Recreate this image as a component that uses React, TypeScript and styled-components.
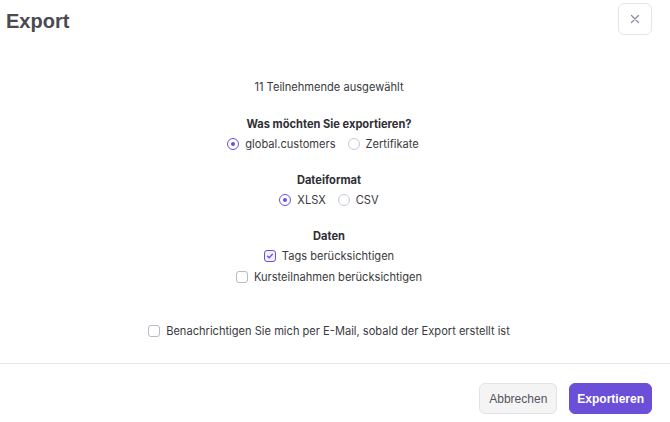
import React, { useState } from "react";
import styled, { createGlobalStyle } from "styled-components";

const Global = createGlobalStyle`
  html, body { margin: 0; padding: 0; background: #ffffff; }
  body { font-family: Inter, "Noto Sans", sans-serif; }
  * { box-sizing: border-box; }
`;

const Page = styled.div`
  width: 670px;
  height: 422px;
  background: #fff;
  display: flex;
  flex-direction: column;
  overflow: hidden;
`;

const Header = styled.div`
  display: flex;
  align-items: center;
  justify-content: space-between;
  padding: 3px 18px 0 6px;
  height: 35px;
`;

const Title = styled.h1`
  margin: 0;
  padding-top: 4px;
  font-family: "Liberation Sans", Arial, sans-serif;
  font-weight: 700;
  font-size: 20px;
  color: #4a4a50;
  line-height: 24px;
`;

const CloseButton = styled.button`
  width: 34px;
  height: 32px;
  border: 1px solid #e4e4ea;
  border-radius: 6px;
  background: #fff;
  display: flex;
  align-items: center;
  justify-content: center;
  padding: 0;
  cursor: pointer;
`;

const Content = styled.div`
  flex: 1;
  display: flex;
  flex-direction: column;
  align-items: center;
  padding: 44px 12px 0 0;
  color: #3a3a40;
  font-size: 11.1px;
  line-height: 16px;
`;

const Info = styled.div`
  margin-bottom: 21px;
  color: #3a3a40;
`;

const Section = styled.div`
  display: flex;
  flex-direction: column;
  align-items: center;
  gap: 4px;
  margin-bottom: 20px;
`;

const CheckList = styled.div`
  display: flex;
  flex-direction: column;
  align-items: center;
  gap: 5px;
`;

const SectionTitle = styled.div`
  font-weight: 700;
  color: #2f2f35;
`;

const Row = styled.div<{ $shift?: number }>`
  display: flex;
  align-items: center;
  gap: 12px;
  margin-right: ${(p) => p.$shift ?? 0}px;
`;

const Option = styled.label`
  display: inline-flex;
  align-items: center;
  gap: 6px;
  cursor: pointer;
  white-space: nowrap;
`;

const RadioDot = styled.span<{ $on: boolean }>`
  width: 12px;
  height: 12px;
  border-radius: 50%;
  border: 1px solid ${(p) => (p.$on ? "#6c4fd9" : "#c9c9d1")};
  display: inline-flex;
  align-items: center;
  justify-content: center;
  background: #fff;
  &::after {
    content: "";
    width: 4px;
    height: 4px;
    border-radius: 50%;
    background: ${(p) => (p.$on ? "#6c4fd9" : "transparent")};
  }
`;

const Box = styled.span<{ $on: boolean }>`
  width: 12px;
  height: 12px;
  border-radius: 3px;
  border: 1px solid ${(p) => (p.$on ? "#6c4fd9" : "#b9b9c2")};
  background: ${(p) => (p.$on ? "#f3f0ff" : "#fff")};
  display: inline-flex;
  align-items: center;
  justify-content: center;
`;

const EmailRow = styled.div`
  margin-top: 18px;
`;

const Divider = styled.div`
  height: 1px;
  background: #e6e6ea;
  width: 100%;
`;

const Footer = styled.div`
  display: flex;
  justify-content: flex-end;
  gap: 12px;
  padding: 19px 18px 8px 0;
`;

const Button = styled.button<{ $primary?: boolean }>`
  height: 31px;
  padding: 0 ${(p) => (p.$primary ? "7px" : "9px")};
  border-radius: 6px;
  font-family: "Liberation Sans", Arial, sans-serif;
  font-size: 12px;
  font-weight: ${(p) => (p.$primary ? 700 : 400)};
  border: 1px solid ${(p) => (p.$primary ? "#6c4fd9" : "#e2e2e6")};
  background: ${(p) => (p.$primary ? "#6c4fd9" : "#f4f4f5")};
  color: ${(p) => (p.$primary ? "#ffffff" : "#55555b")};
  cursor: pointer;
`;

function Radio({ on, label, onClick }: { on: boolean; label: string; onClick: () => void }) {
  return (
    <Option onClick={onClick}>
      <RadioDot $on={on} />
      {label}
    </Option>
  );
}

function Check({ on, label, onClick }: { on: boolean; label: string; onClick: () => void }) {
  return (
    <Option onClick={onClick}>
      <Box $on={on}>
        {on && (
          <svg width="8" height="8" viewBox="0 0 8 8">
            <path d="M1.6 4.2 L3.2 5.7 L6.4 2.3" fill="none" stroke="#6c4fd9" strokeWidth="1.3" strokeLinecap="round" strokeLinejoin="round" />
          </svg>
        )}
      </Box>
      {label}
    </Option>
  );
}

export default function App() {
  const [what, setWhat] = useState("customers");
  const [fmt, setFmt] = useState("xlsx");
  const [tags, setTags] = useState(true);
  const [kurse, setKurse] = useState(false);
  const [mail, setMail] = useState(false);

  return (
    <Page>
      <Global />
      <Header>
        <Title>Export</Title>
        <CloseButton aria-label="Schließen">
          <svg width="10" height="10" viewBox="0 0 10 10">
            <path d="M1.5 1.5 L8.5 8.5 M8.5 1.5 L1.5 8.5" stroke="#8a86a6" strokeWidth="1.2" strokeLinecap="round" />
          </svg>
        </CloseButton>
      </Header>
      <Content>
        <Info>11 Teilnehmende ausgewählt</Info>
        <Section>
          <SectionTitle>Was möchten Sie exportieren?</SectionTitle>
          <Row $shift={12}>
            <Radio on={what === "customers"} label="global.customers" onClick={() => setWhat("customers")} />
            <Radio on={what === "zert"} label="Zertifikate" onClick={() => setWhat("zert")} />
          </Row>
        </Section>
        <Section>
          <SectionTitle>Dateiformat</SectionTitle>
          <Row>
            <Radio on={fmt === "xlsx"} label="XLSX" onClick={() => setFmt("xlsx")} />
            <Radio on={fmt === "csv"} label="CSV" onClick={() => setFmt("csv")} />
          </Row>
        </Section>
        <Section>
          <SectionTitle>Daten</SectionTitle>
          <CheckList>
            <Check on={tags} label="Tags berücksichtigen" onClick={() => setTags(!tags)} />
            <Check on={kurse} label="Kursteilnahmen berücksichtigen" onClick={() => setKurse(!kurse)} />
          </CheckList>
        </Section>
        <EmailRow>
          <Check on={mail} label="Benachrichtigen Sie mich per E-Mail, sobald der Export erstellt ist" onClick={() => setMail(!mail)} />
        </EmailRow>
      </Content>
      <Divider />
      <Footer>
        <Button>Abbrechen</Button>
        <Button $primary>Exportieren</Button>
      </Footer>
    </Page>
  );
}
